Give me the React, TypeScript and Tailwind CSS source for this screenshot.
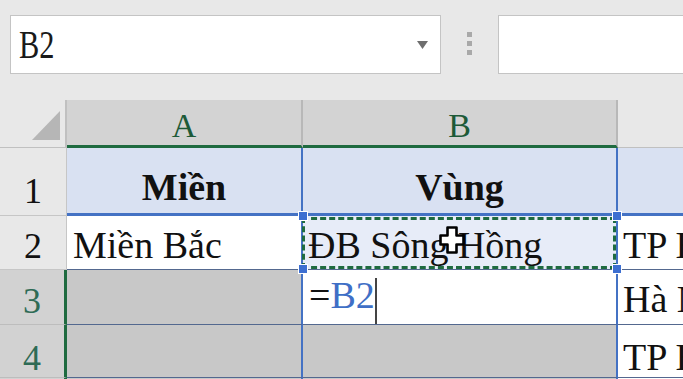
export default function App() {
  const serif = { fontFamily: '"Liberation Serif", "Times New Roman", serif' };

  return (
    <div className="relative h-[379px] w-[683px] overflow-hidden bg-[#e8e8e8] text-[#111]" style={serif}>
      {/* Name box + formula bar */}
      <div className="flex h-[100px] items-start pl-[10px] pt-[15px]">
        <div className="flex h-[59px] w-[431px] items-center justify-between border border-[#c4c4c4] bg-white pl-[8px] pr-[12px]">
          <span className="origin-left scale-x-[0.76] text-[40px] leading-none text-[#1a1a1a]">B2</span>
          <svg width="11" height="8" viewBox="0 0 11 8">
            <path d="M0 0 L11 0 L5.5 8 Z" fill="#6e6e6e" />
          </svg>
        </div>
        <div className="ml-[26px] mt-[17px] flex flex-col gap-[4px]">
          <div className="h-[5px] w-[5px] bg-[#a9a9a9]" />
          <div className="h-[5px] w-[5px] bg-[#a9a9a9]" />
          <div className="h-[5px] w-[5px] bg-[#a9a9a9]" />
        </div>
        <div className="ml-[26px] h-[59px] flex-1 border border-r-0 border-[#c4c4c4] bg-white" />
      </div>

      {/* Sheet grid */}
      <div className="grid grid-cols-[67px_236px_315px_1fr] grid-rows-[48px_68px_54px_55px_53px_20px]">
        {/* Header row */}
        <div className="flex items-end justify-end border-r-2 border-b border-[#c0c0c0] pb-[7px] pr-[5px]">
          <svg width="28" height="29" viewBox="0 0 28 29">
            <path d="M28 0 L28 29 L0 29 Z" fill="#b6b6b6" />
          </svg>
        </div>
        <div className="flex items-end justify-center border-r-2 border-b-[3px] border-r-[#b8b8b8] border-b-[#1f6b40] bg-[#d3d3d3] pb-[2px] text-[34px] leading-[34px] text-[#1d5a38]">
          A
        </div>
        <div className="flex items-end justify-center border-r-2 border-b-[3px] border-r-[#b8b8b8] border-b-[#1f6b40] bg-[#d3d3d3] pb-[2px] text-[34px] leading-[34px] text-[#1d5a38]">
          B
        </div>
        <div className="border-b border-[#c0c0c0]" />

        {/* Row 1 */}
        <div className="flex items-end justify-center border-r border-b border-[#c6c6c6] pb-[6px] text-[36px] leading-[36px]">
          1
        </div>
        <div className="flex items-end justify-center border-r-2 border-b-[3px] border-[#4472c4] bg-[#d9e1f2] pb-[7px] text-[38px] font-bold leading-[38px]">
          Miền
        </div>
        <div className="flex items-end justify-center border-r-2 border-b-[3px] border-[#4472c4] bg-[#d9e1f2] pb-[7px] text-[38px] font-bold leading-[38px]">
          Vùng
        </div>
        <div className="border-b-[3px] border-[#4472c4] bg-[#d9e1f2]" />

        {/* Row 2 */}
        <div className="flex items-end justify-center border-r border-b border-[#c6c6c6] pb-[5px] text-[36px] leading-[36px]">
          2
        </div>
        <div className="flex items-end whitespace-nowrap border-r-2 border-b border-r-[#4472c4] border-b-[#53688f] bg-white pb-[5px] pl-[6px] text-[38px] leading-[38px]">
          Miền Bắc
        </div>
        <div className="relative flex items-end whitespace-nowrap border-r-2 border-b border-r-[#4472c4] border-b-[#53688f] bg-[#e7ecf8] pb-[5px] pl-[5px] text-[38px] leading-[38px]">
          ĐB Sông Hồng
          {/* copy marquee */}
          <div className="absolute -left-[1px] top-[1px] h-[52px] w-[314px] border-[3px] border-dashed border-[#1f6b40]" />
          {/* reference handles */}
          <div className="absolute -left-[5px] -top-[5px] h-[10px] w-[10px] border border-white bg-[#3d6fd1]" />
          <div className="absolute -right-[6px] -top-[5px] h-[10px] w-[10px] border border-white bg-[#3d6fd1]" />
          <div className="absolute -bottom-[5px] -left-[5px] h-[10px] w-[10px] border border-white bg-[#3d6fd1]" />
          <div className="absolute -bottom-[5px] -right-[6px] h-[10px] w-[10px] border border-white bg-[#3d6fd1]" />
          {/* mouse cursor */}
          <svg className="absolute left-[136px] top-[10px]" width="26" height="28" viewBox="0 0 26 28">
            <path
              d="M8.5 1.5 H17.5 V9.5 H24.5 V18.5 H17.5 V26.5 H8.5 V18.5 H1.5 V9.5 H8.5 Z"
              fill="white"
              stroke="black"
              strokeWidth="2.6"
              strokeLinejoin="round"
            />
          </svg>
        </div>
        <div className="flex items-end overflow-hidden whitespace-nowrap border-b border-[#53688f] bg-white pb-[5px] pl-[5px] text-[38px] leading-[38px]">
          TP Hà Nội
        </div>

        {/* Row 3 */}
        <div className="flex items-end justify-center border-r-[3px] border-b border-r-[#1f6b40] border-b-[#bdbdbd] bg-[#d2d2d2] pb-[5px] text-[36px] leading-[36px] text-[#2e6b55]">
          3
        </div>
        <div className="border-r-2 border-b border-r-[#4472c4] border-b-[#53688f] bg-[#c8c8c8]" />
        <div className="flex items-end whitespace-nowrap border-r-2 border-b border-r-[#4472c4] border-b-[#53688f] bg-white pl-[6px] text-[38px] leading-[38px]">
          <span className="mb-[10px]">
            =<span className="text-[#3f6fc6]">B2</span>
          </span>
          <div className="h-[46px] w-[2px] bg-[#444]" />
        </div>
        <div className="flex items-end overflow-hidden whitespace-nowrap border-b border-[#53688f] bg-white pb-[6px] pl-[5px] text-[38px] leading-[38px]">
          Hà Nội
        </div>

        {/* Row 4 */}
        <div className="flex items-end justify-center border-r-[3px] border-b border-r-[#1f6b40] border-b-[#bdbdbd] bg-[#d2d2d2] pb-[1px] text-[36px] leading-[36px] text-[#2e6b55]">
          4
        </div>
        <div className="border-r-2 border-b border-r-[#4472c4] border-b-[#53688f] bg-[#c8c8c8]" />
        <div className="border-r-2 border-b border-r-[#4472c4] border-b-[#53688f] bg-[#c8c8c8]" />
        <div className="flex items-end overflow-hidden whitespace-nowrap border-b border-[#53688f] bg-white pb-[1px] pl-[5px] text-[38px] leading-[38px]">
          TP Hải Phòng
        </div>

        {/* Row 5 (cut off) */}
        <div className="border-r-[3px] border-[#1f6b40] bg-[#d2d2d2]" />
        <div className="border-r-2 border-[#4472c4] bg-[#c8c8c8]" />
        <div className="border-r-2 border-[#4472c4] bg-[#c8c8c8]" />
        <div className="bg-white" />
      </div>
    </div>
  );
}
